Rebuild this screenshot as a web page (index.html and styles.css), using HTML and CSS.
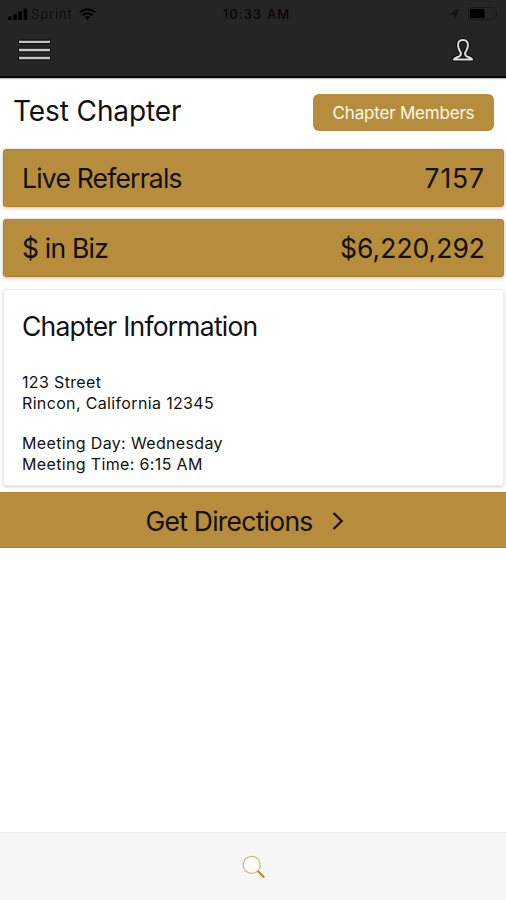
FILE: index.html
```
<!DOCTYPE html>
<html lang="en">
<head>
<meta charset="utf-8">
<title>Test Chapter</title>
<link rel="stylesheet" href="styles.css">
</head>
<body>
<header class="top">
  <div class="status">
    <div class="carrier">
      <svg width="20" height="12" viewBox="0 0 20 12"><path d="M0 8.5h3.6V12H0zM5.2 6.3h3.6V12H5.200zM10.400 3.500H14V12h-3.600zM15.600 .5h3.600V12h-3.600z"/></svg>
      <span class="carrier-name">Sprint</span>
      <svg class="wifi" width="17" height="12" viewBox="0 0 17 12"><g fill="none" stroke="#000" stroke-width="2"><path d="M1 4.300Q8.500-1.800 16 4.300"/><path d="M3.700 7.200q4.800-3.900 9.600 0"/></g><path d="M5.700 9q2.800-2 5.600 0L8.500 12z"/></svg>
    </div>
    <span class="clock">10:33 AM</span>
    <div class="power">
      <svg width="12" height="12" viewBox="0 0 12 12"><path d="M.5 6 11 1 6.800 11.300 6.600 6.200z" fill="#101010"/></svg>
      <svg class="battery" width="30" height="13" viewBox="0 0 30 13"><rect x=".5" y=".5" width="26" height="12" rx="2.500" fill="none" stroke="#1a1a1a"/><rect x="2" y="2" width="14.500" height="9" rx="1"/><path d="M28 4q2 2.500 0 5z" fill="#151515"/></svg>
    </div>
  </div>
  <nav class="nav">
    <svg width="35" height="24" viewBox="0 0 35 24"><path d="M1 3.800h33M1 12h33M1 20h33" stroke="#0c0c0c" stroke-width="4.500"/><path d="M2 3.800h31M2 12h31M2 20h31" stroke="#c8c5c6" stroke-width="2.300"/></svg>
    <svg width="24" height="24" viewBox="0 0 24 24"><g fill="none" stroke-linejoin="round"><path d="M12 2c-3.700 0-5.300 2.500-4.900 6.200.3 2.700 1.200 3.900 2.100 5.300.9 1.400.8 3.300-.4 4.400-1.600 1.400-5.600 1.600-6 3.600h18.400c-.4-2-4.400-2.200-6-3.600-1.200-1.100-1.300-3-.4-4.400.9-1.400 1.800-2.600 2.100-5.300.4-3.700-1.200-6.200-4.900-6.200z" stroke="#080808" stroke-width="4"/><path d="M12 2c-3.700 0-5.300 2.500-4.900 6.200.3 2.700 1.200 3.900 2.100 5.300.9 1.400.8 3.300-.4 4.400-1.600 1.400-5.600 1.600-6 3.600h18.400c-.4-2-4.400-2.200-6-3.600-1.200-1.100-1.300-3-.4-4.400.9-1.400 1.800-2.600 2.100-5.300.4-3.700-1.200-6.200-4.900-6.200z" stroke="#dedede" stroke-width="2"/></g></svg>
  </nav>
</header>
<main class="main">
  <div class="heading">
    <h1 class="title">Test Chapter</h1>
    <button class="members">Chapter Members</button>
  </div>
  <section class="stat"><span class="label">Live Referrals</span><span class="count">7157</span></section>
  <section class="stat"><span class="label">$ in Biz</span><span class="money">$6,220,292</span></section>
  <section class="info">
    <h2 class="info-title">Chapter Information</h2>
    <p class="lines">123 Street<br>Rincon, California 12345</p>
    <p class="lines">Meeting Day: Wednesday<br>Meeting Time: 6:15 AM</p>
  </section>
  <button class="directions"><span>Get Directions</span><svg width="12" height="20" viewBox="0 0 12 20"><path d="M1.500 2 9.700 10 1.500 18" fill="none" stroke="#140f05" stroke-width="2.200"/></svg></button>
</main>
<footer class="tabs">
  <svg width="24" height="24" viewBox="0 0 24 24"><circle cx="9.700" cy="9.800" r="8.500" fill="#fbfbf9" stroke="#cdb57e" stroke-width="1.200"/><path d="m15.800 16 6.500 6.500" stroke="#b88a2c" stroke-width="2"/></svg>
</footer>
</body>
</html>
```
FILE: styles.css
```
* { box-sizing: border-box; }
body {
  margin: 0;
  height: 900px;
  display: flex;
  flex-direction: column;
  background: #fff;
  color: #111;
  font-family: Inter, "Liberation Sans", sans-serif;
}
svg { display: block; }
h1, h2, p { margin: 0; font-weight: 400; }
button { border: 0; font: inherit; color: inherit; }
.top {
  height: 78px;
  background: #252525;
  border-bottom: 2px solid #080808;
  box-shadow: 0 1px 1px #bbb;
}
.status {
  height: 27px;
  display: grid;
  grid-template-columns: 1fr auto 1fr;
  align-items: center;
  padding: 0 8px;
  font-size: 13px;
  color: #060606;
}
.carrier, .power { display: flex; align-items: center; }
.carrier-name { margin-left: 3px; letter-spacing: .85px; color: #0c0c0c; }
.wifi { margin-left: 6px; }
.clock { font-weight: 500; letter-spacing: 1.1px; margin-left: 7px; }
.power { justify-content: flex-end; gap: 8px; }
.nav {
  display: flex;
  justify-content: space-between;
  padding: 11px 31px 0 17px;
}
.main { flex: 1; }
.heading {
  height: 71px;
  display: flex;
  justify-content: space-between;
  align-items: center;
  padding: 0 12px 3px 13px;
}
.title { font-size: 28px; letter-spacing: -.1px; line-height: 34px; padding-bottom: 2px; }
.members {
  width: 181px;
  height: 37px;
  padding: 1px 0 0;
  border-radius: 6px;
  background: #b58d3d;
  color: #fff8e8;
  font-size: 17px;
  letter-spacing: -.2px;
}
.stat {
  height: 58px;
  margin: 0 2px 12px 3px;
  padding: 0 18px;
  display: flex;
  justify-content: space-between;
  align-items: center;
  background: #b58d3d;
  border: 1px solid #b18127;
  border-radius: 3px;
  box-shadow: 0 1px 4px rgba(0, 0, 0, .25);
  color: #140f05;
  font-size: 26.5px;
}
.label { letter-spacing: -.8px; }
.count { letter-spacing: .9px; }
.info {
  height: 197px;
  margin: 0 2px 6px 3px;
  padding: 21px 18px 0;
  border: 1px solid #ededed;
  border-radius: 3px;
  box-shadow: 0 1px 3px rgba(0, 0, 0, .18);
}
.info-title { font-size: 26.5px; letter-spacing: -.78px; line-height: 30px; margin-bottom: 31px; }
.lines { font-size: 16px; letter-spacing: .35px; line-height: 20.500px; margin-bottom: 20px; }
.directions {
  width: 100%;
  height: 56px;
  padding: 1px 17px 0 0;
  display: flex;
  justify-content: center;
  align-items: center;
  gap: 19px;
  background: #b58d3d;
  border: solid #b18127;
  border-width: 1px 0;
  color: #140f05;
  font-size: 26.5px;
  letter-spacing: -.75px;
}
.tabs {
  height: 68px;
  padding-top: 22px;
  display: flex;
  justify-content: center;
  background: #f7f7f7;
  border-top: 1px solid #e8e8e8;
}
.tabs svg { margin-left: 1px; }
```
